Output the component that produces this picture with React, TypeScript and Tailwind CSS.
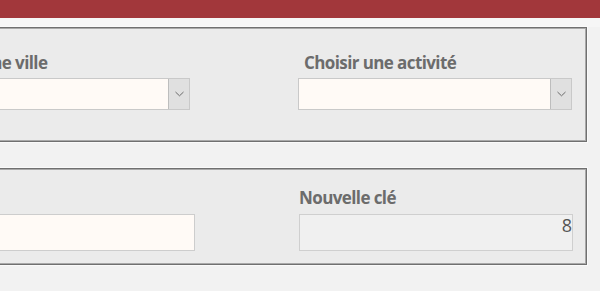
import React from 'react';

const labelCls = "text-[17px] leading-[22px] font-bold text-[#6c6c6c] tracking-[-0.6px] whitespace-nowrap";

function Dropdown({ width }: { width: string }) {
  return (
    <div className={`flex h-[32px] ${width} border border-[#c9c9c9] bg-[#fffaf6]`}>
      <div className="flex-1" />
      <div className="flex w-[21px] items-center justify-center border-l border-[#bdbdbd] bg-[#e0e0e0]">
        <svg width="9" height="6" viewBox="0 0 9 6" fill="none">
          <path d="M0.5 1 L4.5 4.8 L8.5 1" stroke="#6a6a6a" strokeWidth="1" />
        </svg>
      </div>
    </div>
  );
}

function Panel({ className, children }: { className: string; children: React.ReactNode }) {
  return (
    <div className={`-ml-[200px] mr-[13px] border border-[#707070] bg-[#ebebeb] shadow-[inset_0_0_0_1px_#a9a9a9,0_0_0_1px_#fafafa] ${className}`}>
      {children}
    </div>
  );
}

export default function App() {
  return (
    <div className="h-[291px] w-[600px] overflow-hidden bg-[#f2f2f2]" style={{ fontFamily: '"Open Sans", "Noto Sans", sans-serif' }}>
      <div className="h-[18px] bg-[#a2373b]" />
      <div className="h-[9px] bg-[#f6f6f6]" />

      <Panel className="h-[115px]">
        <div className="flex pl-[119px] pt-[24px]">
          <div className="w-[270px]">
            <div className={`${labelCls} pl-[2px]`}>Choisir une ville</div>
            <div className="mt-[4px]">
              <Dropdown width="w-[270px]" />
            </div>
          </div>
          <div className="ml-[108px] w-[274px]">
            <div className={`${labelCls} pl-[6px]`}>Choisir une activité</div>
            <div className="mt-[4px]">
              <Dropdown width="w-[274px]" />
            </div>
          </div>
        </div>
      </Panel>

      <div className="h-[26px]" />

      <Panel className="h-[97px]">
        <div className="flex pl-[119px] pt-[18px]">
          <div className="w-[275px] pt-[27px]">
            <div className="h-[37px] border border-[#cdcdcd] bg-[#fffaf6]" />
          </div>
          <div className="ml-[104px] w-[274px]">
            <div className={labelCls}>Nouvelle clé</div>
            <div className="mt-[5px] flex h-[37px] justify-end border border-[#cfcfcf] bg-[#f0f0f0] pr-0 text-[18px] leading-[20px] text-[#555555]">
              8
            </div>
          </div>
        </div>
      </Panel>
    </div>
  );
}
